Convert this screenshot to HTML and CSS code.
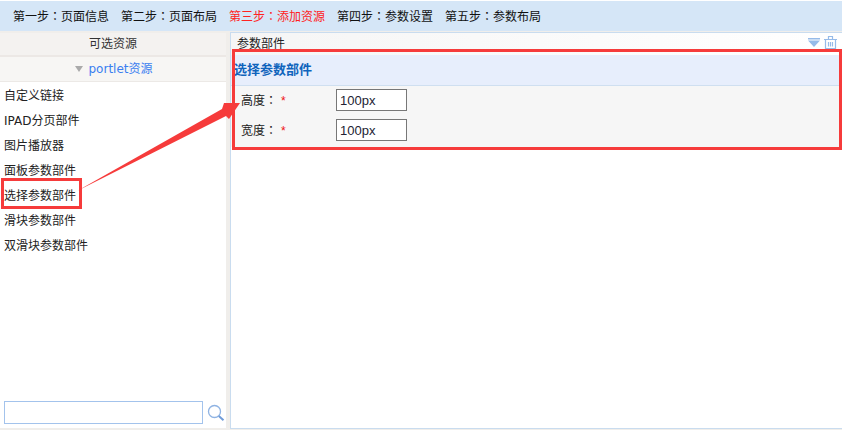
FILE: index.html
```html
<!DOCTYPE html>
<html lang="zh-CN">
<head>
<meta charset="utf-8">
<title>添加资源</title>
<link rel="stylesheet" href="styles.css">
</head>
<body>
<div class="page">
  <nav class="steps" lang="zh-TW">
    <span class="step">第一步：页面信息</span>
    <span class="step">第二步：页面布局</span>
    <span class="step current">第三步：添加资源</span>
    <span class="step">第四步：参数设置</span>
    <span class="step">第五步：参数布局</span>
  </nav>
  <div class="main">
    <aside class="side">
      <div class="side-title">可选资源</div>
      <div class="side-group"><span class="tri"></span><span class="group-name">portlet资源</span></div>
      <ul class="list">
        <li>自定义链接</li>
        <li>IPAD分页部件</li>
        <li>图片播放器</li>
        <li>面板参数部件</li>
        <li>选择参数部件</li>
        <li>滑块参数部件</li>
        <li>双滑块参数部件</li>
      </ul>
      <div class="search">
        <input class="search-input" type="text">
        <svg class="search-icon" width="18" height="18" viewBox="0 0 18 18" fill="none">
          <circle cx="7.5" cy="7.5" r="6" stroke="#8fb3e3" stroke-width="1.3"/>
          <path d="M11.8 12 L16.5 16.2" stroke="#6f9bd8" stroke-width="2"/>
        </svg>
      </div>
    </aside>
    <section class="content">
      <div class="part-head">
        <span class="part-title">参数部件</span>
        <span class="part-tools">
          <svg width="12" height="9" viewBox="0 0 12 9"><path d="M0 0H12V1.500H0Z M0 2.500H12L6 9Z" fill="#96bbe9"/></svg>
          <svg width="13" height="13" viewBox="0 0 13 13" fill="none" stroke="#96bbe9" stroke-width="1.200"><path d="M0 3.500H13M4.500 3V.5H8.500V3M1.500 3.500V12.500H11.500V3.500M4.500 6V10.500M6.500 6V10.500M8.500 6V10.500"/></svg>
        </span>
      </div>
      <div class="card">
        <div class="card-title">选择参数部件</div>
        <div class="card-body">
          <div class="field"><label class="field-label" lang="zh-TW">高度：<em class="req">*</em></label><input class="field-input" type="text" value="100px"></div>
          <div class="field"><label class="field-label" lang="zh-TW">宽度：<em class="req">*</em></label><input class="field-input" type="text" value="100px"></div>
        </div>
      </div>
    </section>
  </div>
  <div class="mark mark-card"></div>
  <div class="mark mark-item"></div>
  <svg class="arrow" width="180" height="110" viewBox="0 0 180 110">
    <path d="M7 101 L152 19 L154 13 L170 13 L159 29 L156 26 Z" fill="#f63b3b"/>
  </svg>
</div>
</body>
</html>
```
FILE: styles.css
```css
* { box-sizing: border-box; }
html, body { margin: 0; padding: 0; background: #fff; }
body { font: 12px/1.2 "Liberation Sans", "Noto Sans CJK SC", sans-serif; color: #222; }
.page { position: relative; width: 842px; height: 430px; overflow: hidden; display: flex; flex-direction: column; }
.steps { height: 30px; margin-top: 1px; background: #d5e6f7; display: flex; align-items: center; padding: 2px 0 0 13px; gap: 12px; flex: none; font-family: "Liberation Sans", "Noto Sans CJK TC", sans-serif; }
.step { width: 96px; white-space: nowrap; color: #111; }
.step.current { color: #f22; }
.main { flex: 1; display: flex; background: #f0eeeb; padding-top: 1px; }
.side { width: 226px; background: #fff; display: flex; flex-direction: column; border-bottom: 2px solid #f0eeeb; margin-top: 1px; }
.side-title { height: 24px; background: #f4f2f0; border-bottom: 2px solid #ece8e5; display: flex; align-items: center; justify-content: center; color: #333; }
.side-group { height: 25px; background: #f7f6f4; border-bottom: 1px solid #ece9e6; display: flex; align-items: center; justify-content: center; gap: 5px; padding-left: 2px; }
.tri { width: 0; height: 0; border: 4px solid transparent; border-top: 6px solid #aaa; border-bottom: 0; }
.group-name { color: #3a7ef0; font-family: "DejaVu Sans", "Noto Sans CJK SC", sans-serif; }
.list { list-style: none; margin: 0; padding: 2px 0 0 4px; flex: 1; }
.list li { height: 25px; line-height: 25px; color: #222; font-family: "DejaVu Sans", "Noto Sans CJK SC", sans-serif; }
.search { display: flex; align-items: center; gap: 4px; padding: 0 0 4px 4px; }
.search-input { width: 199px; height: 23px; border: 1px solid #a3c3ec; background: #fff; padding: 0; }
.search-icon { flex: none; }
.content { width: 612px; margin-left: 4px; background: #fff; border: 1px solid #c9dcef; border-right: 0; margin-bottom: 1px; }
.part-head { height: 22px; display: flex; justify-content: space-between; align-items: flex-start; padding: 3px 0 0 6px; background: linear-gradient(90deg, #f5f5f5, #fff); }
.part-title { color: #222; padding-top: 1px; line-height: 14px; }
.part-tools { display: flex; align-items: center; gap: 4px; padding-right: 5px; }
.card-title { height: 31px; padding-left: 3px; background: #e7eefc; border-bottom: 1px solid #cfdff0; line-height: 29px; font-size: 13px; font-weight: bold; color: #0f64bc; }
.card-body { height: 61px; background: #f6f6f6; display: flex; flex-direction: column; gap: 2px; }
.field { height: 28px; display: flex; align-items: center; padding-left: 10px; }
.field-label { width: 95px; padding-top: 3px; color: #222; font-family: "Liberation Sans", "Noto Sans CJK TC", sans-serif; }
.req { font-style: normal; color: #e11; margin-left: 4px; }
.field-input { width: 71px; height: 22px; border: 1px solid #777; background: #fff; padding: 0 3px; font: 13px "Liberation Sans", sans-serif; color: #223; }
.mark { position: absolute; border: 3px solid #f63b3b; pointer-events: none; }
.mark-card { left: 232px; top: 49px; width: 610px; height: 101px; }
.mark-item { left: 1px; top: 178px; width: 81px; height: 31px; }
.arrow { position: absolute; left: 70px; top: 90px; pointer-events: none; }
```
